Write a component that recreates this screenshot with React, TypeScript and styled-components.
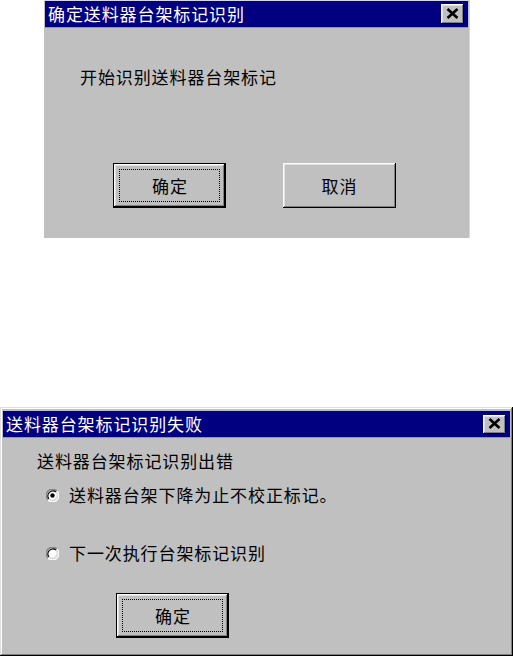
import React from "react";
import styled, { createGlobalStyle, css } from "styled-components";

const Global = createGlobalStyle`
  html, body { margin: 0; padding: 0; background: #ffffff; }
  body { font-family: "Noto Sans CJK SC", "Noto Sans", sans-serif; }
`;

const Page = styled.div`
  width: 513px;
  height: 656px;
  display: flex;
  flex-direction: column;
  align-items: flex-start;
  overflow: hidden;
`;

const TopWindow = styled.div`
  margin-left: 44px;
  width: 426px;
  height: 238px;
  box-sizing: border-box;
  background: #c0c0c0;
  padding: 1px 2px 0 1px;
  display: flex;
  flex-direction: column;
  box-shadow: inset 0 1px #d6d6e0, inset -1px 0 #d6d6e0;
`;

const BottomWindow = styled.div`
  margin-top: 169px;
  width: 513px;
  height: 249px;
  box-sizing: border-box;
  background: #c0c0c0;
  padding: 4px 3px 3px 3px;
  display: flex;
  flex-direction: column;
  box-shadow: inset -1px -1px #000000, inset 1px 1px #dfdfdf,
    inset -2px -2px #808080, inset 2px 2px #ffffff;
`;

const TitleBar = styled.div`
  height: 26px;
  flex: none;
  background: #000080;
  display: flex;
  align-items: center;
  justify-content: space-between;
  padding: 0 4px 0 3px;
  border-bottom: 1px solid #9090b8;
`;

const textStyle = css`
  font-size: 17px;
  line-height: 20px;
  letter-spacing: 0.9px;
  white-space: nowrap;
`;

const TitleText = styled.span`
  ${textStyle};
  color: #ffffff;
`;

const bevel = css`
  background: #c0c0c0;
  box-shadow: inset -1px -1px #000000, inset 1px 1px #ffffff,
    inset -2px -2px #808080, inset 2px 2px #dfdfdf;
`;

const CloseButton = styled.div<{ $h: number }>`
  ${bevel};
  width: 23px;
  height: ${(p) => p.$h}px;
  display: flex;
  align-items: center;
  justify-content: center;
  padding-bottom: 1px;
  box-sizing: border-box;
`;

const TopBody = styled.div`
  flex: 1;
  display: flex;
  flex-direction: column;
  padding: 39px 0 0 35px;
`;

const Message = styled.div`
  ${textStyle};
  color: #000000;
`;

const ButtonRow = styled.div`
  display: flex;
  gap: 57px;
  margin-top: 76px;
  margin-left: 33px;
`;

const PushButton = styled.div<{ $default?: boolean }>`
  width: 113px;
  height: 45px;
  box-sizing: border-box;
  display: flex;
  align-items: center;
  justify-content: center;
  padding: 5px;
  ${textStyle};
  color: #000000;
  background: #c0c0c0;
  box-shadow: inset -1px -1px #000000, inset 1px 1px #ffffff,
    inset -2px -2px #808080, inset 2px 2px #dfdfdf;
  ${(p) =>
    p.$default &&
    css`
      border: 1px solid #000000;
    `}
`;

const FocusRing = styled.div`
  flex: 1;
  align-self: stretch;
  display: flex;
  align-items: center;
  justify-content: center;
  border: 1px dotted #000000;
  padding-left: 1px;
`;

const BottomBody = styled.div`
  flex: 1;
  display: flex;
  flex-direction: column;
  padding: 13px 0 0 34px;
`;

const RadioRow = styled.div<{ $gap: number }>`
  display: flex;
  align-items: center;
  gap: 10px;
  margin-top: ${(p) => p.$gap}px;
  margin-left: 9px;
`;

const RadioLabel = styled.span`
  ${textStyle};
  color: #000000;
`;

const BottomButtonRow = styled.div`
  display: flex;
  margin-top: 30px;
  margin-left: 79px;
`;

const XIcon = () => (
  <svg width="13" height="11" viewBox="0 0 13 11">
    <path d="M1.5 1 L11.5 10 M11.5 1 L1.5 10" stroke="#000" strokeWidth="2.6" />
  </svg>
);

const RadioIcon = ({ checked }: { checked?: boolean }) => (
  <svg width="13" height="13" viewBox="0 0 13 13" style={{ flex: "none" }}>
    <path d="M11 2 A6.3 6.3 0 0 0 2 11" fill="none" stroke="#808080" strokeWidth="1.2" />
    <path d="M2 11 A6.3 6.3 0 0 0 11 2" fill="none" stroke="#ffffff" strokeWidth="1.2" />
    <circle cx="6.5" cy="6.5" r="5" fill="#ffffff" />
    <path d="M10 3 A5 5 0 0 0 3 10" fill="none" stroke="#000000" strokeWidth="1.1" />
    <path d="M3 10 A5 5 0 0 0 10 3" fill="none" stroke="#dfdfdf" strokeWidth="1.1" />
    {checked && <circle cx="6.5" cy="6.5" r="2.2" fill="#000000" />}
  </svg>
);

export default function App() {
  return (
    <>
      <Global />
      <Page>
        <TopWindow>
          <TitleBar>
            <TitleText>确定送料器台架标记识别</TitleText>
            <CloseButton $h={20}>
              <XIcon />
            </CloseButton>
          </TitleBar>
          <TopBody>
            <Message>开始识别送料器台架标记</Message>
            <ButtonRow>
              <PushButton $default>
                <FocusRing>确定</FocusRing>
              </PushButton>
              <PushButton>取消</PushButton>
            </ButtonRow>
          </TopBody>
        </TopWindow>

        <BottomWindow>
          <TitleBar>
            <TitleText>送料器台架标记识别失败</TitleText>
            <CloseButton $h={19}>
              <XIcon />
            </CloseButton>
          </TitleBar>
          <BottomBody>
            <Message>送料器台架标记识别出错</Message>
            <RadioRow $gap={14}>
              <RadioIcon checked />
              <RadioLabel>送料器台架下降为止不校正标记。</RadioLabel>
            </RadioRow>
            <RadioRow $gap={38}>
              <RadioIcon />
              <RadioLabel>下一次执行台架标记识别</RadioLabel>
            </RadioRow>
            <BottomButtonRow>
              <PushButton $default>
                <FocusRing>确定</FocusRing>
              </PushButton>
            </BottomButtonRow>
          </BottomBody>
        </BottomWindow>
      </Page>
    </>
  );
}
